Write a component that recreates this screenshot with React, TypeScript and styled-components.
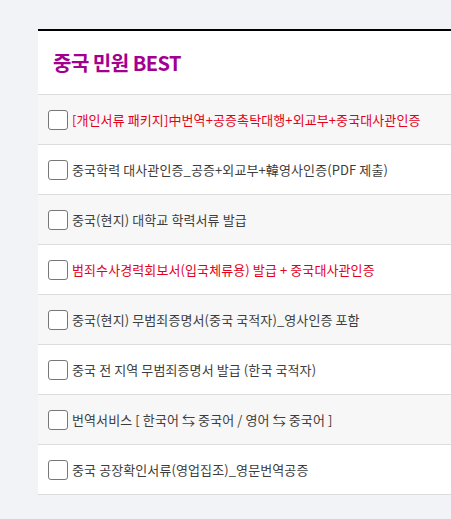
import React from "react";
import styled, { createGlobalStyle } from "styled-components";

const Global = createGlobalStyle`
  html, body { margin: 0; padding: 0; background: #f2f3f6; overflow: hidden; }
  body { font-family: "Noto Sans CJK KR", "Noto Sans", sans-serif; }
`;

const Page = styled.div`
  padding: 29px 0 0 38px;
`;

const Panel = styled.section`
  background: #fff;
  border-top: 2px solid #000;
`;

const Header = styled.div`
  height: 63px;
  display: flex;
  align-items: center;
  padding-left: 15px;
  border-bottom: 1px solid #dcdcdc;
`;

const Title = styled.h2`
  margin: 0;
  font-size: 20px;
  font-weight: 700;
  color: #a3008f;
  letter-spacing: -0.5px;
`;

const Row = styled.label<{ $alt: boolean }>`
  height: 49px;
  display: flex;
  align-items: center;
  gap: 4px;
  padding-left: 10px;
  background: ${(p) => (p.$alt ? "#f7f7f7" : "#fff")};
  border-bottom: 1px solid #dcdcdc;
`;

const Box = styled.span`
  width: 18px;
  height: 18px;
  border: 1px solid #777;
  border-radius: 3px;
  background: #fff;
  flex: none;
`;

const Text = styled.span<{ $red: boolean }>`
  font-size: 13px;
  letter-spacing: 0.1px;
  color: ${(p) => (p.$red ? "#e4001b" : "#3d3d3d")};
  white-space: nowrap;
`;

const items: { t: string; red?: boolean }[] = [
  { t: "[개인서류 패키지]中번역+공증촉탁대행+외교부+중국대사관인증", red: true },
  { t: "중국학력 대사관인증_공증+외교부+韓영사인증(PDF 제출)" },
  { t: "중국(현지) 대학교 학력서류 발급" },
  { t: "범죄수사경력회보서(입국체류용) 발급 + 중국대사관인증", red: true },
  { t: "중국(현지) 무범죄증명서(중국 국적자)_영사인증 포함" },
  { t: "중국 전 지역 무범죄증명서 발급 (한국 국적자)" },
  { t: "번역서비스 [ 한국어 ⇆ 중국어 / 영어 ⇆ 중국어 ]" },
  { t: "중국 공장확인서류(영업집조)_영문번역공증" },
];

export default function App() {
  return (
    <>
      <Global />
      <Page>
        <Panel>
          <Header>
            <Title>중국 민원 BEST</Title>
          </Header>
          {items.map((it, i) => (
            <Row key={i} $alt={i % 2 === 0}>
              <Box />
              <Text $red={!!it.red}>{it.t}</Text>
            </Row>
          ))}
        </Panel>
      </Page>
    </>
  );
}
